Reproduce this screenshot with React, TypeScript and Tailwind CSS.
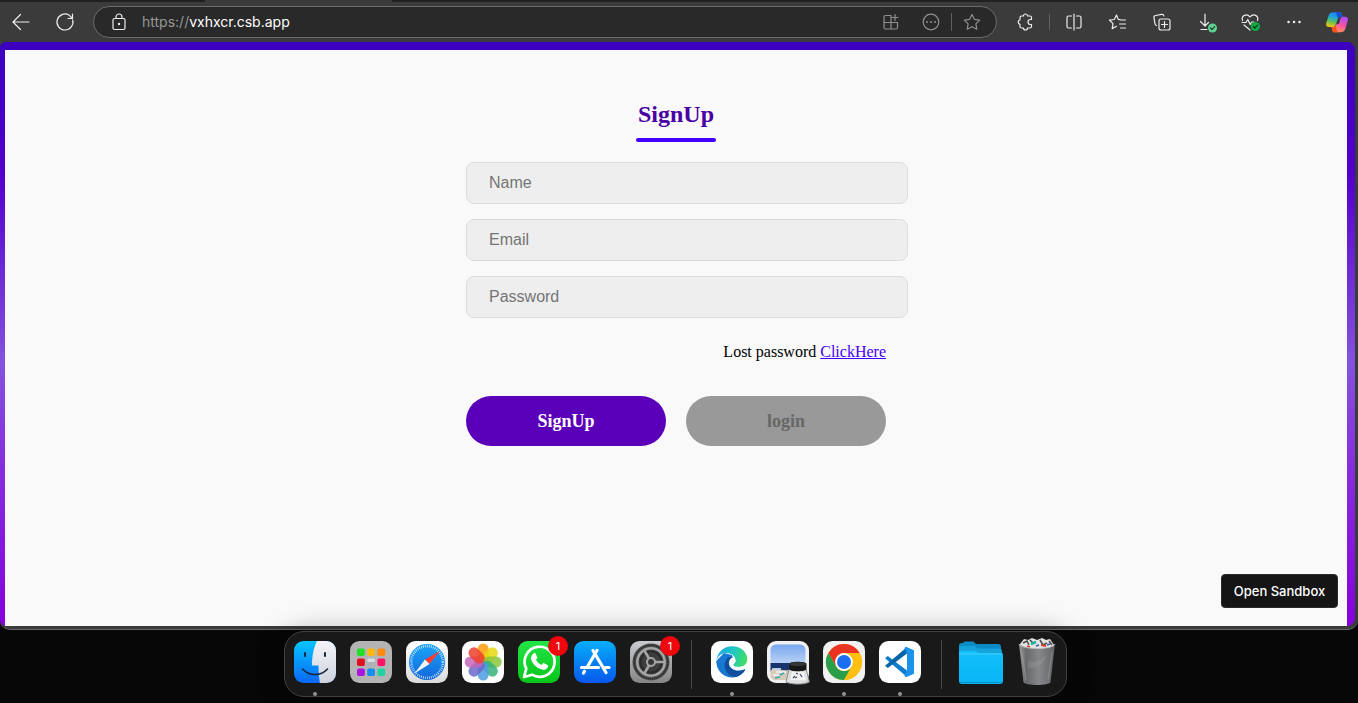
import type { ReactNode } from 'react';

function LineIcon({ children }: { children: ReactNode }) {
  return (
    <svg
      viewBox="0 0 24 24"
      className="size-6 shrink-0"
      fill="none"
      stroke="currentColor"
      strokeWidth="1.2"
      strokeLinecap="round"
      strokeLinejoin="round"
      aria-hidden="true"
    >
      {children}
    </svg>
  );
}

function ToolButton({ label, children, className = '' }: { label: string; children: ReactNode; className?: string }) {
  return (
    <button type="button" aria-label={label} className={`shrink-0 ${className}`}>
      {children}
    </button>
  );
}

function CopilotIcon() {
  return (
    <svg viewBox="0 0 22 24" className="h-6 w-[22px]" aria-hidden="true">
      <defs>
        <linearGradient id="cpA" x1="0.6" y1="0" x2="0.3" y2="1">
          <stop offset="0" stopColor="#1a7df0" />
          <stop offset="0.35" stopColor="#1fa5dc" />
          <stop offset="0.65" stopColor="#5fc05a" />
          <stop offset="1" stopColor="#f2c30c" />
        </linearGradient>
        <linearGradient id="cpB" x1="0.7" y1="0" x2="0.3" y2="1">
          <stop offset="0" stopColor="#b04cf5" />
          <stop offset="0.5" stopColor="#f752a6" />
          <stop offset="1" stopColor="#ff9d55" />
        </linearGradient>
      </defs>
      <path d="M7.500 2.200h5.700c1.500 0 2.100.8 2.600 2.300l.7 2.300h-2c-1.600 0-2.300.9-2.800 2.500L9.800 14.500c-.6 1.900-1.400 2.500-3.200 2.500H2.800C.5 17-.4 15.300.3 12.800L2.700 5.400c.8-2.400 2.200-3.200 4.800-3.200z" fill="url(#cpA)" />
      <path d="M8.500 2.200h4.700c1.500 0 2.100.8 2.600 2.300l.7 2.300h-2c-1.300 0-2.100.5-2.600 1.600C10.900 6.400 10.800 2.600 8.500 2.200z" fill="#1650d8" />
      <path d="M14.500 22.200H8.900c-1.500 0-2.200-.8-2.600-2.300l-.8-2.900h1.800c1.700 0 2.500-.9 3-2.500l.4-1.300c.5 1.600 1.900 1.600 2.500-.3l1.100-3.600c.6-1.900 1.400-2.500 3.200-2.500h1.700c2.300 0 3.200 1.700 2.500 4.200L19.300 19c-.8 2.400-2.200 3.200-4.800 3.200z" fill="url(#cpB)" />
      <path d="M13 22.200H8.900c-1.500 0-2.200-.8-2.600-2.300l-.8-2.900h1.800c1.200 0 2-.4 2.600-1.300.5 2.300.5 5.800 3.100 6.500z" fill="#ff4f1f" />
    </svg>
  );
}

function Toolbar() {
  return (
    <header className="bg-[#3b3b3b] text-[#ececec]">
      <div className="flex h-0.5">
        <div className="w-[205px] bg-[#202020]" />
        <div className="w-[187px]" />
        <div className="flex-1 bg-[#202020]" />
      </div>
      <div className="flex h-10 items-center pr-[10px] pl-[9px]">
        <ToolButton label="Back">
          <LineIcon><path d="M20 12H4M11.500 4.500 4 12l7.500 7.500" /></LineIcon>
        </ToolButton>
        <ToolButton label="Refresh" className="ml-5">
          <LineIcon><path d="M19.700 10A8 8 0 1 1 16 5.100M19.500 4v4.500H15M16 5.100l3.500 3.400" /></LineIcon>
        </ToolButton>
        <div className="ml-4 flex h-8 min-w-0 flex-1 items-center rounded-full border border-[#6b6b6b] bg-[#292929] pr-3 pl-[13px]">
          <LineIcon>
            <rect x="6" y="8.500" width="12" height="11" rx="1.500" />
            <path d="M9 8.500V7a3 3 0 0 1 6 0v1.500" />
            <circle cx="12" cy="14" r=".6" fill="currentColor" />
          </LineIcon>
          <div className="ml-[11px] min-w-0 flex-1 truncate font-['Inter',sans-serif] text-sm leading-5 text-[#969696]">
            https://<span className="text-white">vxhxcr.csb.app</span>
          </div>
          <div className="flex shrink-0 items-center text-[#8f8f8f]">
            <ToolButton label="Apps">
              <LineIcon>
                <path d="M12 5.500H6.500A1.500 1.500 0 0 0 5 7v10.500A1.500 1.500 0 0 0 6.500 19H17a1.500 1.500 0 0 0 1.500-1.500v-5H5M12 5.500V19M16 4.500v6M13 7.500h6" />
              </LineIcon>
            </ToolButton>
            <ToolButton label="Site options" className="ml-4">
              <LineIcon>
                <circle cx="12" cy="12" r="7.800" />
                <path d="M8 12h.1M12 12h.1M16 12h.1" strokeWidth="1.800" />
              </LineIcon>
            </ToolButton>
            <div className="ml-2 h-[18px] w-px bg-[#606060]" />
            <ToolButton label="Add to favorites" className="ml-2">
              <LineIcon><path d="m12 4.500 2.400 4.800 5.300.8-3.800 3.800.9 5.300-4.800-2.500-4.800 2.500.9-5.300-3.800-3.800 5.300-.8z" /></LineIcon>
            </ToolButton>
          </div>
        </div>
        <ToolButton label="Extensions" className="ml-4">
          <LineIcon>
            <path d="M18.500 9.500V7.500A1.500 1.500 0 0 0 17 6h-2.500a2 2 0 0 0-4 0H8.500A1.500 1.500 0 0 0 7 7.500v2.300a2.300 2.300 0 0 0 0 4.500v2.200A1.500 1.500 0 0 0 8.500 18h2a2 2 0 0 0 4 0H17a1.500 1.500 0 0 0 1.500-1.500v-2h-1a2.500 2.500 0 0 1 0-5z" />
          </LineIcon>
        </ToolButton>
        <div className="ml-3 h-4 w-px bg-[#606060]" />
        <div className="ml-3 flex shrink-0 items-center gap-5">
          <ToolButton label="Split screen">
            <LineIcon><path d="M9.500 6H6.500A1.500 1.500 0 0 0 5 7.500v9A1.500 1.500 0 0 0 6.500 18h3M14.500 6h3A1.500 1.500 0 0 1 19 7.500v9a1.500 1.500 0 0 1-1.500 1.500h-3M12 4v16" /></LineIcon>
          </ToolButton>
          <ToolButton label="Favorites">
            <LineIcon><path d="m14 9.700-1.700-.2L10.500 5 8.200 9.500l-4.700.7 3.500 3.400-.8 5 4.300-2.300M14.500 10h5M13.500 14h6M14.500 18h5" /></LineIcon>
          </ToolButton>
          <ToolButton label="Collections">
            <LineIcon>
              <rect x="9" y="9" width="11" height="11" rx="2" />
              <path d="M14.500 11.500v6M11.500 14.500h6M6.500 15.500A2 2 0 0 1 5 13.800L4 7.800a2 2 0 0 1 1.600-2.300l6-1.100a2 2 0 0 1 2.300 1.600" />
            </LineIcon>
          </ToolButton>
          <ToolButton label="Downloads">
            <LineIcon>
              <path d="M11 4v12M6.500 11.500 11 16l3.500-3.500M7 19.500h6" />
              <circle cx="18.500" cy="18" r="4.500" fill="#5fd192" stroke="none" />
              <path d="m16.500 18 1.500 1.500 2.700-2.800" stroke="#23402f" />
            </LineIcon>
          </ToolButton>
          <ToolButton label="Browser essentials">
            <LineIcon>
              <path d="M4.500 10.500C3 6 8.500 2.500 12 7c3.500-4.500 9-1 7.500 3.500M4 12.500h4l1.800-3 2.400 5 1.500-2.500H16M6 15l6 5" />
              <circle cx="17.300" cy="16.500" r="4.600" fill="#10ad45" stroke="none" />
              <path d="m15.300 16.500 1.500 1.500 2.700-2.800" stroke="#06351a" />
            </LineIcon>
          </ToolButton>
          <ToolButton label="Settings and more">
            <LineIcon><path d="M6.500 12h.1M12 12h.1M17.500 12h.1" strokeWidth="2.400" /></LineIcon>
          </ToolButton>
          <ToolButton label="Copilot"><CopilotIcon /></ToolButton>
        </div>
      </div>
    </header>
  );
}

function Field({ label, type }: { label: string; type: string }) {
  return (
    <input
      type={type}
      aria-label={label}
      placeholder={label}
      className="block h-[42px] w-[442px] shrink-0 rounded-lg border border-[#dcdcdc] bg-[#eeeeee] px-[22px] font-['Liberation_Sans',sans-serif] text-base text-black placeholder:text-[#757575]"
    />
  );
}

function SignUpPage() {
  return (
    <main className="relative flex flex-1 flex-col rounded-tl-md rounded-tr-lg rounded-br-lg rounded-bl-md bg-[linear-gradient(180deg,#3c00c0_0%,#4600c6_12%,#5400cc_23%,#8452de_55%,#8632de_70%,#8600dc_100%)] pt-2 pr-2 pl-[5px]">
      <div className="flex flex-1 flex-col items-center bg-[#f9f9f9] pt-[50px] font-['Liberation_Serif',serif]">
        <form className="flex w-[420px] flex-col" onSubmit={(e) => e.preventDefault()}>
          <div className="flex flex-col items-center gap-2.5">
            <h1 className="text-2xl leading-7 font-bold text-[#4a00a5]">SignUp</h1>
            <div className="h-1 w-20 rounded-full bg-[#4400ff]" />
          </div>
          <div className="mt-5 flex flex-col gap-[15px]">
            <Field label="Name" type="text" />
            <Field label="Email" type="email" />
            <Field label="Password" type="password" />
          </div>
          <p className="mt-[25px] text-right text-base leading-[18px] text-black">
            Lost password <a href="#reset" className="text-[#4400ff] underline">ClickHere</a>
          </p>
          <div className="mt-[35px] flex gap-5">
            <button type="submit" className="h-[50px] flex-1 rounded-full bg-[#5b00b9] text-lg font-bold text-white">SignUp</button>
            <button type="button" className="h-[50px] flex-1 rounded-full bg-[#999999] text-lg font-bold text-[#676767]">login</button>
          </div>
        </form>
      </div>
      <button type="button" className="absolute right-[17px] bottom-[18px] h-[34px] w-[117px] rounded border border-[#2a2a2a] bg-[#151515] pt-0.5 font-['Inter',sans-serif] text-[13px] font-medium text-white">
        Open Sandbox
      </button>
    </main>
  );
}

function Tile({ children, fill }: { children: ReactNode; fill: string }) {
  return (
    <svg viewBox="0 0 42 42" className="size-[42px] shrink-0" aria-hidden="true">
      <rect width="42" height="42" rx="9.500" fill={fill} />
      {children}
    </svg>
  );
}

function Grad({ id, from, to }: { id: string; from: string; to: string }) {
  return (
    <defs>
      <linearGradient id={id} x1="0" y1="0" x2="0" y2="1">
        <stop offset="0" stopColor={from} />
        <stop offset="1" stopColor={to} />
      </linearGradient>
    </defs>
  );
}

function FinderIcon() {
  return (
    <Tile fill="url(#finder)">
      <Grad id="finder" from="#06c5ff" to="#0a68f5" />
      <Grad id="finderR" from="#f4f4f8" to="#cfd3de" />
      <path d="M23 0h9.500A9.500 9.500 0 0 1 42 9.500v23a9.500 9.500 0 0 1-9.500 9.500H26c-1-5-1.500-10-1.500-17.500H18C18 14 20 6 23 0z" fill="url(#finderR)" />
      <path d="M11 12v3M31 12v3" stroke="#17263a" strokeWidth="2" strokeLinecap="round" />
      <path d="M8.500 28c7 7.500 18 7.500 25 0" fill="none" stroke="#17263a" strokeWidth="1.600" strokeLinecap="round" />
    </Tile>
  );
}

const launchpadColors = ['#1ee024', '#ffb90a', '#ff8a0a', '#e01020', '#a9b3ba', '#ff1264', '#aa14dc', '#1490f5', '#20d3a0'];

function LaunchpadIcon() {
  return (
    <Tile fill="#b4b4b4">
      {launchpadColors.map((color, i) => (
        <rect key={color} x={7 + (i % 3) * 10.2} y={7.5 + Math.floor(i / 3) * 10} width="7.800" height="7.500" rx="1.800" fill={color} />
      ))}
      <rect x="17.200" y="17.500" width="7.800" height="3.500" rx="1.500" fill="#d7dde0" />
    </Tile>
  );
}

function SafariIcon() {
  return (
    <Tile fill="url(#safariBg)">
      <Grad id="safariBg" from="#ffffff" to="#dcdcdc" />
      <Grad id="safariDial" from="#1ba5f8" to="#1266dc" />
      <circle cx="21" cy="21" r="18" fill="url(#safariDial)" />
      <circle cx="21" cy="21" r="15.800" fill="none" stroke="#e6f5ff" strokeWidth="2.600" strokeDasharray=".7 1.300" />
      <path d="M34 10 19 18.500l4.500 4.500z" fill="#ff3b30" />
      <path d="M8.500 32.500 19 18.500l4.500 4.500z" fill="#f4f4f4" />
    </Tile>
  );
}

const petals = ['#ff9a0a', '#e8d80e', '#8bc73c', '#35b27a', '#4c9fe0', '#6a68c8', '#c565b8', '#f0402c'];

function PhotosIcon() {
  return (
    <Tile fill="#ffffff">
      {petals.map((color, i) => (
        <rect key={color} x="15.700" y="2.500" width="11" height="18.500" rx="5.500" fill={color} fillOpacity=".85" transform={`rotate(${i * 45} 21.200 21)`} />
      ))}
    </Tile>
  );
}

function WhatsAppIcon() {
  return (
    <Tile fill="url(#whats)">
      <Grad id="whats" from="#22e547" to="#08c51b" />
      <path d="m6 36 2.300-8.300A15 15 0 1 1 14 33.700z" fill="none" stroke="#fff" strokeWidth="2.700" strokeLinejoin="round" />
      <path d="M15.500 12.500c.8-.7 1.800-.6 2.200.3l1.500 3.500c.3.600-.1 1.200-1.200 2.400 1.300 2.500 3.100 4.100 5.600 5.200 1.100-1.300 1.700-2.100 2.500-1.700l3.400 1.700c.8.400.6 1.500.1 2.500-1 1.800-3.500 2.700-5.500 2.100-5.800-1.500-9.800-5.700-11-10.500-.5-2 .8-4.200 2.400-5.500z" fill="#fff" />
    </Tile>
  );
}

function AppStoreIcon() {
  return (
    <Tile fill="url(#store)">
      <Grad id="store" from="#08aef9" to="#0758ec" />
      <g fill="none" stroke="#fff" strokeWidth="3.200" strokeLinecap="round">
        <path d="M23 9.500 13 26.500M19 9.500 32 31.500M7.500 26.500h17M31 26.500h4M9.500 32l1-1.700" />
      </g>
    </Tile>
  );
}

function SettingsIcon() {
  return (
    <Tile fill="url(#settings)">
      <Grad id="settings" from="#c8ccd0" to="#858585" />
      <circle cx="21" cy="21" r="18.500" fill="#4d4d4d" />
      <circle cx="21" cy="21" r="16.800" fill="none" stroke="#202020" strokeWidth="1.500" strokeDasharray="1 1" />
      <circle cx="21" cy="21" r="13.700" fill="#3d3d3d" stroke="#a5a5a5" strokeWidth="2.500" />
      <circle cx="21" cy="21" r="10.500" fill="none" stroke="#292929" strokeWidth="1.600" />
      <circle cx="21" cy="21" r="4" fill="none" stroke="#a5a5a5" strokeWidth="2" />
      <path d="M25 21h10M19 17.500 14 9M19 24.500 14 33" stroke="#a5a5a5" strokeWidth="2.600" />
      <circle cx="21" cy="21" r="2" fill="#343434" />
    </Tile>
  );
}

function EdgeIcon() {
  return (
    <Tile fill="#ffffff">
      <defs>
        <linearGradient id="edgeTop" x1="0" y1=".3" x2="1" y2=".5">
          <stop offset="0" stopColor="#18a8e8" />
          <stop offset=".55" stopColor="#20c8c0" />
          <stop offset="1" stopColor="#42df60" />
        </linearGradient>
      </defs>
      <path d="M5.200 20c0 9 7 16.500 16 16.500 5.500 0 10-2.500 12.700-7.200l-8-2.300-5-13-8-2z" fill="#1879d2" />
      <path d="M5.200 20C6.500 11 13 5.300 21 5.300c9 0 15.300 6 15.300 12.700 0 5-3.800 8-8.300 8-3.500 0-5.500-1-5.500-2s2-1.500 2-4.500c0-4.500-4-7.500-9.500-7.500-4.500 0-8.500 3-9.800 8z" fill="url(#edgeTop)" />
      <path d="M16 17.500c-6 8 .5 18.500 8 18.500 4.500-.8 8-3.500 10-6.700.5-1-.3-1.400-1-1-6 3-15 .5-15-6.300 0-3 2-5.300 4-5.500-2.500-.8-4.500-.4-6 1z" fill="#104f9e" />
      <path d="M24.500 19.500c0-2-1.500-3.300-3-3-2 .5-3.500 3-3.500 5.500 0 6.800 9 9.300 15 6.300l2.500-5.300c-2 2-4.500 3-7.500 3-3.500 0-5.500-1-5.500-2s2-1.500 2-4.500z" fill="#fff" />
    </Tile>
  );
}

function PreviewIcon() {
  return (
    <svg viewBox="0 0 44 44" className="size-11 shrink-0" aria-hidden="true">
      <Grad id="sky" from="#78a7ee" to="#bcd3f5" />
      <rect width="42" height="42" rx="9" fill="#f0f0f0" />
      <path d="M3.500 9A5.500 5.500 0 0 1 9 3.500h24A5.500 5.500 0 0 1 38.500 9v14h-35z" fill="url(#sky)" />
      <path d="M3.500 22h35v9h-35z" fill="#17346c" />
      <path d="M3.500 29c7-2 16 2 35-1v7a4 4 0 0 1-4 4H8a4.500 4.500 0 0 1-4.500-4.500z" fill="#d6cbb8" />
      <path d="M5 28h9M9 31h10M6 34h6" stroke="#edf6fa" strokeWidth="1.500" />
      <path d="m13 34 4-2M8 37l5-1" stroke="#3aa6b0" strokeWidth="1.500" />
      <path d="M22 28h17l3.500 13c-5 3-18 3-23.500 0z" fill="#dcdedf" fillOpacity=".94" stroke="#73777a" strokeWidth=".8" />
      <path d="M25 31h12l2 8H23z" fill="#f2f2f2" />
      <path d="m26 37 2-2m1-3 2 1m2 0 2 3m-7 1 2-1" fill="none" stroke="#3e4b63" strokeWidth="1.200" />
      <path d="M22 23c0-3 17.500-3 17.500 0v5c0 3-17.500 3-17.500 0z" fill="#171717" />
      <ellipse cx="30.800" cy="23" rx="8.700" ry="2" fill="#363636" />
    </svg>
  );
}

function ChromeIcon() {
  return (
    <Tile fill="#f1f1f1">
      <circle cx="21" cy="21" r="18" fill="#fbbc05" />
      <path d="M5.400 12A18 18 0 0 1 36.600 12H21a9 9 0 0 0-7.800 4.500L13 25z" fill="#ea3323" />
      <path d="M5.400 12A18 18 0 0 0 21 39l7.800-13.500A9 9 0 0 1 13.200 25.500z" fill="#2b9e4b" />
      <path d="M36.600 12A18 18 0 0 1 21 39l7.800-13.500A9 9 0 0 0 21 12z" fill="#fdc00f" />
      <circle cx="21" cy="21" r="8.900" fill="#fff" />
      <circle cx="21" cy="21" r="7" fill="#1a6ff0" />
    </Tile>
  );
}

function CodeIcon() {
  return (
    <Tile fill="#ffffff">
      <path d="M6 17.300 8.800 15 28 29.500V36z" fill="#0c7ccc" />
      <path d="M6 24.700 8.800 27 28 12.500V6z" fill="#0565a9" />
      <path d="m27.500 6 7.500 3.200v23.600L27.500 36c-1 .3-2-.5-2-1.500l2.500-5v-17l-2.500-5c0-1 1-1.800 2-1.500z" fill="#1c93ea" />
    </Tile>
  );
}

function FolderIcon() {
  return (
    <svg viewBox="0 0 44 44" className="size-11 shrink-0" aria-hidden="true">
      <Grad id="folder" from="#12c0fb" to="#08b4f6" />
      <path d="M0 4.500A2.500 2.500 0 0 1 2.500 2H4l1.500-1.500h9L17 3h22a3 3 0 0 1 3 3v10H0z" fill="#0a8cc4" />
      <path d="M0 7a2 2 0 0 1 2-2h14l3 2.500h21a3 3 0 0 1 3 3V18H0z" fill="#14a3da" />
      <path d="M0 10h17l3 2h21a3 3 0 0 1 3 3v25a3 3 0 0 1-3 3H3a3 3 0 0 1-3-3z" fill="url(#folder)" />
      <path d="M0 13h44" stroke="#52d5ff" strokeWidth=".8" />
      <path d="M1 41.500h42" stroke="#078fc4" strokeWidth="1" />
    </svg>
  );
}

function TrashIcon() {
  return (
    <svg viewBox="0 0 40 50" className="h-[50px] w-10 shrink-0" aria-hidden="true">
      <defs>
        <linearGradient id="bin" x1="0" x2="1">
          <stop offset="0" stopColor="#9b9d9f" />
          <stop offset=".2" stopColor="#67696b" />
          <stop offset=".55" stopColor="#85878a" />
          <stop offset="1" stopColor="#626466" />
        </linearGradient>
      </defs>
      <path d="M2 7h36l-4.500 38c-.5 4-26.500 4-27 0z" fill="url(#bin)" />
      <path d="m3 7 4-5 4 1 4-2 5 2 5-2 4 2 4-1 4 6c-4 5-30 5-34-1z" fill="#e3e3e1" />
      <path d="m6 6 4-2 2 4M23 3l3 5 4-2M32 4l3 4M13 3l3 3" fill="none" stroke="#494949" strokeWidth="1.500" />
      <path d="m14 7 5-2" stroke="#16b6a5" strokeWidth="2.500" />
      <path d="m24 8 5 1M10 9l3 1" stroke="#d7402b" strokeWidth="1.800" />
      <path d="m30 8 3-1M19 9l3-1" stroke="#3260ad" strokeWidth="1.800" />
      <path d="M2 7c2 6 34 6 36 0" fill="none" stroke="#c4c4c4" strokeWidth=".8" />
      <path d="M5 15l4 28M31 43l4-28" stroke="#b5b7b9" strokeOpacity=".35" strokeWidth="1" />
      <path d="M11 24c8 3 15-2 18-6-1 9-10 14-18 13" fill="#999c9e" fillOpacity=".35" />
    </svg>
  );
}

function DockItem({ label, children, badge, running, className = 'w-[42px]' }: { label: string; children: ReactNode; badge?: string; running?: boolean; className?: string }) {
  return (
    <button type="button" aria-label={label} className={`relative flex h-[64px] shrink-0 items-start pt-[9px] ${className}`}>
      {children}
      {badge && (
        <span className="absolute top-1 -right-2 flex size-5 items-center justify-center rounded-full bg-[#f0060d] font-['Inter',sans-serif] text-[11px] text-white">
          {badge}
        </span>
      )}
      {running && <span className="absolute bottom-0 left-1/2 size-1 -translate-x-1/2 rounded-full bg-[#929292]" />}
    </button>
  );
}

function Dock() {
  return (
    <footer className="relative flex justify-center pt-px pr-[7px] pb-1.5">
      <nav aria-label="Dock" className="flex h-[66px] items-start rounded-[20px] border border-[#414141] bg-[#191919] px-[9px] shadow-[0_0_26px_rgba(0,0,0,0.3)]">
        <div className="flex gap-3.5">
          <DockItem label="Finder" running><FinderIcon /></DockItem>
          <DockItem label="Launchpad"><LaunchpadIcon /></DockItem>
          <DockItem label="Safari"><SafariIcon /></DockItem>
          <DockItem label="Photos"><PhotosIcon /></DockItem>
          <DockItem label="WhatsApp" badge="1"><WhatsAppIcon /></DockItem>
          <DockItem label="App Store"><AppStoreIcon /></DockItem>
          <DockItem label="System Settings" badge="1"><SettingsIcon /></DockItem>
        </div>
        <div className="mx-[19px] mt-2 h-[49px] w-px bg-[#484848]" />
        <div className="flex gap-3.5">
          <DockItem label="Edge" running><EdgeIcon /></DockItem>
          <DockItem label="Preview"><PreviewIcon /></DockItem>
          <DockItem label="Chrome" running><ChromeIcon /></DockItem>
          <DockItem label="Visual Studio Code" running><CodeIcon /></DockItem>
        </div>
        <div className="mt-2 mr-[17px] ml-5 h-[49px] w-px bg-[#484848]" />
        <div className="flex gap-3.5">
          <DockItem label="Folder" className="w-11"><FolderIcon /></DockItem>
          <div className="-mt-1"><DockItem label="Trash" className="w-10"><TrashIcon /></DockItem></div>
        </div>
      </nav>
    </footer>
  );
}

export default function App() {
  return (
    <div className="flex min-h-screen flex-col bg-[#060606]">
      <div className="flex flex-1 flex-col rounded-b-[10px] border-b border-[#666666] bg-[#3b3b3b]">
        <Toolbar />
        <div className="flex flex-1 flex-col pr-[3px] pb-[3px]">
          <SignUpPage />
        </div>
      </div>
      <Dock />
    </div>
  );
}
